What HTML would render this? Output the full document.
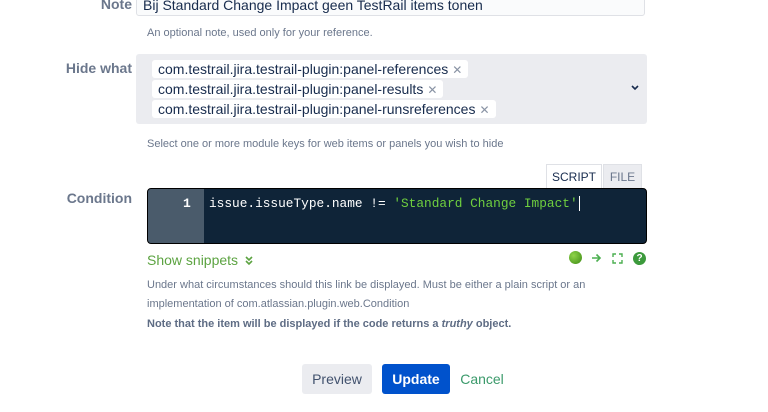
<!DOCTYPE html>
<html><head><style>
body{margin:0;width:768px;height:412px;background:#fff;font-family:"Liberation Sans",sans-serif;position:relative;overflow:hidden;color:#172b4d}
.a{position:absolute}
.lbl{font-size:14px;font-weight:bold;color:#6b778c;text-align:right;width:90px;left:42px}
.help{font-size:11px;color:#6b778c}
.tag{position:absolute;left:152px;height:18px;background:#fff;border-radius:3px;font-size:14px;line-height:18px;padding:0 6px;color:#172b4d}
.tag span{color:#8993a4;font-size:12px;margin-left:4px}
.btn{position:absolute;top:364px;height:30px;line-height:30px;font-size:14px;border-radius:3px;text-align:center}
</style></head><body>
<div class="a lbl" style="top:-4px">Note</div>
<div class="a" style="left:136px;top:-10px;width:509px;height:26px;border:1px solid #dfe1e6;background:#fafbfc;border-radius:3px;font-size:14px;line-height:28px;padding-left:6px;box-sizing:border-box;color:#172b4d">Bij Standard Change Impact geen TestRail items tonen</div>
<div class="a help" style="left:147px;top:27px">An optional note, used only for your reference.</div>

<div class="a lbl" style="top:60px">Hide what</div>
<div class="a" style="left:136px;top:54px;width:511px;height:70px;background:#ebecf0;border-radius:3px"></div>
<div class="tag" style="top:60px">com.testrail.jira.testrail-plugin:panel-references<span>✕</span></div>
<div class="tag" style="top:80px">com.testrail.jira.testrail-plugin:panel-results<span>✕</span></div>
<div class="tag" style="top:100px">com.testrail.jira.testrail-plugin:panel-runsreferences<span>✕</span></div>
<svg class="a" style="left:630px;top:84px" width="10" height="8"><path d="M2 2l3 3 3-3" stroke="#172b4d" stroke-width="1.6" fill="none"/></svg>
<div class="a help" style="left:147px;top:138px">Select one or more module keys for web items or panels you wish to hide</div>

<div class="a" style="left:546px;top:164px;width:56px;height:24px;border:1px solid #dfe1e6;border-bottom:none;background:#fff;font-size:12px;line-height:24px;text-align:center;box-sizing:border-box">SCRIPT</div>
<div class="a" style="left:603px;top:164px;width:39px;height:24px;background:#ebecf0;border:1px solid #dfe1e6;border-bottom:none;font-size:12px;line-height:24px;text-align:center;color:#6b778c;box-sizing:border-box">FILE</div>
<div class="a lbl" style="top:190px">Condition</div>
<div class="a" style="left:147px;top:188px;width:500px;height:56px;background:#0f2438;border:1px solid #000;border-radius:4px;box-sizing:border-box;overflow:hidden">
<div class="a" style="left:0;top:0;width:56px;height:56px;background:#4a5b6b"></div>
<div class="a" style="left:35px;top:7px;font-family:'Liberation Mono',monospace;font-size:13px;color:#fff;font-weight:bold">1</div>
<div class="a" style="left:61px;top:7px;font-family:'Liberation Mono',monospace;font-size:12.8px;color:#fff;white-space:pre">issue.issueType.name != <span style="color:#6fcf3f">'Standard Change Impact'</span><span style="border-left:1px solid #fff;margin-left:1px"></span></div>
</div>
<div class="a" style="left:147px;top:252px;font-size:14px;color:#5ca341">Show snippets <svg width="10" height="10" style="vertical-align:-1px;margin-left:2px"><path d="M2 1l3 3 3-3M2 5l3 3 3-3" stroke="#5ca341" stroke-width="1.6" fill="none"/></svg></div>
<div class="a" style="left:569px;top:251px;width:13px;height:13px;border-radius:50%;background:radial-gradient(circle at 35% 35%,#8fd44a,#3d8a14)"></div>
<svg class="a" style="left:591px;top:253px" width="11" height="10"><path d="M1 5h8M5.5 1.5L9 5 5.5 8.5" stroke="#4caf50" stroke-width="1.6" fill="none"/></svg>
<svg class="a" style="left:612px;top:253px" width="11" height="11"><path d="M1 4V1h3M7 1h3v3M10 7v3H7M4 10H1V7" stroke="#4caf50" stroke-width="1.4" fill="none"/></svg>
<div class="a" style="left:633px;top:252px;width:13px;height:13px;border-radius:50%;background:#3c9a3c;color:#fff;font-size:10px;font-weight:bold;text-align:center;line-height:13px">?</div>
<div class="a help" style="left:147px;top:279px">Under what circumstances should this link be displayed. Must be either a plain script or an</div>
<div class="a help" style="left:147px;top:298px">implementation of com.atlassian.plugin.web.Condition</div>
<div class="a help" style="left:147px;top:318px;font-weight:bold;color:#5e6c84">Note that the item will be displayed if the code returns a <i>truthy</i> object.</div>

<div class="btn" style="left:302px;width:70px;background:#ebecf0;color:#42526e">Preview</div>
<div class="btn" style="left:382px;width:68px;background:#0052cc;color:#fff;font-weight:bold">Update</div>
<div class="btn" style="left:458px;width:48px;color:#3b9a6b">Cancel</div>
</body></html>
